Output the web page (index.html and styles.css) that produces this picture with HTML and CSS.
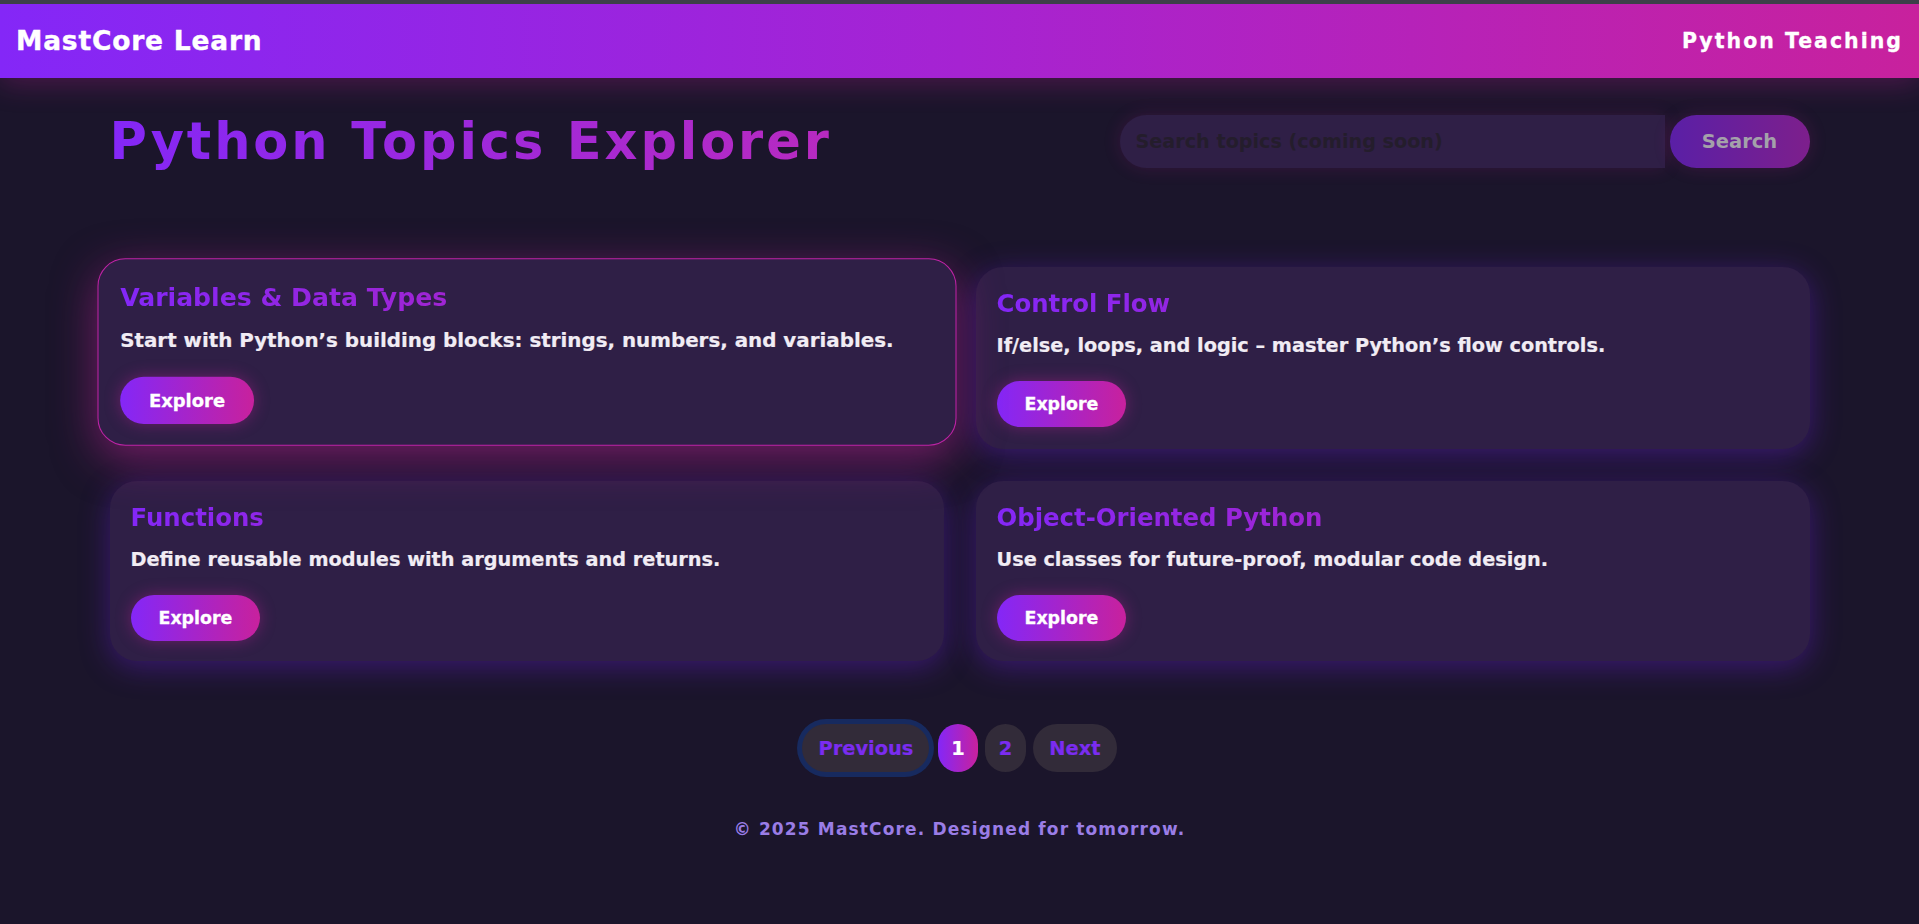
FILE: index.html
```html
<!DOCTYPE html>
<html lang="en">
<head>
<meta charset="utf-8">
<title>MastCore Learn – Python Topics Explorer</title>
<link rel="stylesheet" href="styles.css">
</head>
<body>
<header class="site-header">
  <div class="logo">MastCore Learn</div>
  <div class="tagline">Python Teaching</div>
</header>
<main class="container">
  <div class="top-row">
    <h1 class="page-title">Python Topics Explorer</h1>
    <form class="search">
      <input class="search-input" type="text" placeholder="Search topics (coming soon)">
      <button class="search-btn" type="button">Search</button>
    </form>
  </div>
  <section class="topics">
    <article class="card card-active">
      <h3 class="card-title">Variables &amp; Data Types</h3>
      <p class="card-text">Start with Python’s building blocks: strings, numbers, and variables.</p>
      <a class="explore-btn" href="#">Explore</a>
    </article>
    <article class="card">
      <h3 class="card-title">Control Flow</h3>
      <p class="card-text">If/else, loops, and logic – master Python’s flow controls.</p>
      <a class="explore-btn" href="#">Explore</a>
    </article>
    <article class="card">
      <h3 class="card-title">Functions</h3>
      <p class="card-text">Define reusable modules with arguments and returns.</p>
      <a class="explore-btn" href="#">Explore</a>
    </article>
    <article class="card">
      <h3 class="card-title">Object-Oriented Python</h3>
      <p class="card-text">Use classes for future-proof, modular code design.</p>
      <a class="explore-btn" href="#">Explore</a>
    </article>
  </section>
  <nav class="pagination">
    <button class="page-btn page-focus" type="button">Previous</button>
    <button class="page-btn page-num page-current" type="button">1</button>
    <button class="page-btn page-num" type="button">2</button>
    <button class="page-btn" type="button">Next</button>
  </nav>
</main>
<footer class="site-footer">© 2025 MastCore. Designed for tomorrow.</footer>
</body>
</html>
```
FILE: styles.css
```css
* { box-sizing: border-box; }

html, body {
  margin: 0;
  padding: 0;
}

body {
  min-height: 924px;
  background: #1b152b;
  border-top: 4px solid #3d4049;
  font-family: "DejaVu Sans", "Liberation Sans", sans-serif;
  font-weight: 700;
  color: #f1ecf4;
}

.site-header {
  height: 74px;
  display: flex;
  align-items: center;
  justify-content: space-between;
  padding: 0 16px;
  background: linear-gradient(90deg, #8427f7 0%, #a623d2 50%, #c8219d 100%);
  box-shadow: 0 6px 28px rgba(200, 33, 157, 0.28);
  position: relative;
  z-index: 2;
}

.logo {
  font-size: 26.5px;
  line-height: 30px;
  color: #ffffff;
  letter-spacing: 0.8px;
  -webkit-text-stroke: 0.4px #ffffff;
}

.tagline {
  font-size: 20.5px;
  line-height: 24px;
  color: #ffffff;
  letter-spacing: 2px;
  -webkit-text-stroke: 0.3px #ffffff;
}

.container {
  max-width: 1700px;
  margin: 0 auto;
  padding-top: 34px;
}

.top-row {
  display: flex;
  align-items: center;
  justify-content: space-between;
}

.page-title {
  margin: 0;
  font-size: 51px;
  line-height: 59px;
  font-weight: 700;
  letter-spacing: 2.9px;
  background: linear-gradient(90deg, #8427f7 0%, #b82ac0 100%);
  -webkit-background-clip: text;
  background-clip: text;
  color: transparent;
}

.search {
  display: flex;
  align-items: center;
  gap: 5px;
  margin: 0;
}

.search-input {
  width: 545px;
  height: 53px;
  border: none;
  border-radius: 27px 0 0 27px;
  background: #2f1f46;
  padding: 0 16px;
  font-family: "DejaVu Sans", sans-serif;
  font-weight: 700;
  font-size: 19.2px;
  color: #e0d8ea;
  box-shadow: 0 0 18px rgba(200, 33, 157, 0.16);
  outline: none;
}

.search-input::placeholder {
  color: #241d2c;
}

.search-btn {
  width: 140px;
  height: 53px;
  border: none;
  border-radius: 27px;
  background: linear-gradient(90deg, #5a1fa6 0%, #7d1f8c 100%);
  color: #a4a1aa;
  font-family: "DejaVu Sans", sans-serif;
  font-weight: 700;
  font-size: 19.5px;
  box-shadow: 0 0 18px rgba(200, 33, 157, 0.18);
}

.topics {
  margin-top: 96px;
  display: grid;
  grid-template-columns: 1fr 1fr;
  gap: 32px;
}

.card {
  background: #2f1f46;
  border-radius: 27px;
  padding: 23px 21px 20px;
  box-shadow: 0 6px 30px rgba(110, 32, 230, 0.38);
}

.card-active {
  border: 1.5px solid #bf23a6;
  transform: translateY(-6px) scale(1.03);
  box-shadow: 0 12px 42px rgba(200, 33, 157, 0.5);
  position: relative;
  z-index: 1;
}

.card-title {
  margin: 0;
  font-size: 24.4px;
  line-height: 28px;
  font-weight: 700;
  background: linear-gradient(90deg, #8427f7 0%, #c8219d 100%);
  -webkit-background-clip: text;
  background-clip: text;
  color: transparent;
}

.card-text {
  margin: 16px 0 0;
  font-size: 19.3px;
  line-height: 23px;
  color: #f1ecf4;
  -webkit-text-stroke: 0.2px #f1ecf4;
}

.explore-btn {
  margin-top: 24px;
  height: 46px;
  padding: 0 28px;
  display: inline-flex;
  align-items: center;
  border-radius: 23px;
  background: linear-gradient(90deg, #8427f7 0%, #c8219d 100%);
  color: #ffffff;
  text-decoration: none;
  font-size: 17.4px;
  -webkit-text-stroke: 0.3px #ffffff;
  box-shadow: 0 0 16px rgba(200, 33, 157, 0.4);
}

.pagination {
  margin-top: 63px;
  display: flex;
  justify-content: center;
  align-items: center;
  gap: 7px;
}

.page-btn {
  height: 48px;
  padding: 0 16px;
  border: none;
  border-radius: 24px;
  background: #322b39;
  color: #7b2cf0;
  font-family: "DejaVu Sans", sans-serif;
  font-weight: 700;
  font-size: 19.4px;
  -webkit-text-stroke: 0.2px currentColor;
}

.page-num {
  padding: 0 14px;
}

.page-focus {
  box-shadow: 0 0 0 5px #172a5f;
  margin-right: 2px;
}

.page-current {
  background: linear-gradient(90deg, #8427f7 0%, #c8219d 100%);
  color: #ffffff;
  padding: 0 13px;
}

.site-footer {
  margin-top: 45px;
  text-align: center;
  font-size: 17px;
  line-height: 24px;
  letter-spacing: 1.15px;
  color: #9a7de6;
}
```
